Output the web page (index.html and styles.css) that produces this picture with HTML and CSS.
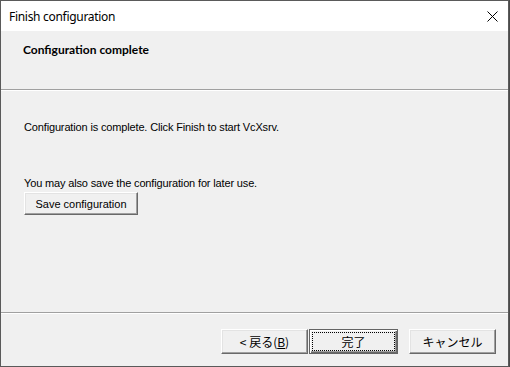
FILE: index.html
```html
<!DOCTYPE html>
<html>
<head>
<meta charset="utf-8">
<link rel="stylesheet" href="styles.css">
</head>
<body>
<div class="window">
  <div class="titlebar">
    <span class="title">Finish configuration</span>
    <svg class="close" width="11" height="11" viewBox="0 0 11 11"><path d="M0.5 0.5 L10.5 10.5 M10.5 0.5 L0.5 10.5" stroke="#000" stroke-width="1"/></svg>
  </div>
  <div class="header"><span class="heading">Configuration complete</span></div>
  <div class="sep"></div>
  <div class="content">
    <p class="line1">Configuration is complete. Click Finish to start VcXsrv.</p>
    <p class="line2">You may also save the configuration for later use.</p>
    <button class="btn save">Save configuration</button>
  </div>
  <div class="sep"></div>
  <div class="footer">
    <button class="btn jp back">&lt;&nbsp;戻る(<u>B</u>)</button>
    <button class="btn jp default"><span class="focus">完了</span></button>
    <button class="btn jp cancel">キャンセル</button>
  </div>
</div>
</body>
</html>
```
FILE: styles.css
```css
* { box-sizing: border-box; }
html, body { margin: 0; padding: 0; background: #4a4a4a; }
body { width: 510px; height: 367px; overflow: hidden; }
.window {
  width: 509px; height: 367px;
  border: 1px solid #5a5a5a;
  background: #f0f0f0;
  display: flex; flex-direction: column;
}
.titlebar {
  height: 30px; background: #fff;
  display: flex; align-items: center; justify-content: space-between;
  padding: 0 10px 0 8px;
}
.title { font-family: "Noto Sans", sans-serif; font-size: 12px; letter-spacing: -0.3px; color: #000; }
.close { display: block; }
.header {
  height: 58px; padding: 9px 0 0 22px;
}
.heading { font-family: "Lato", sans-serif; font-weight: bold; font-size: 12px; color: #000; }
.sep { height: 2px; border-top: 1px solid #a0a0a0; border-bottom: 1px solid #fff; }
.content {
  flex: 1; padding: 0 0 0 23px;
  font-family: "Liberation Sans", sans-serif; font-size: 11px; letter-spacing: -0.15px; color: #000;
}
.content p { margin: 0; }
.line1 { padding-top: 30px; }
.line2 { padding-top: 44px; }
.btn {
  background: #f0f0f0; color: #000;
  border: 1px solid; border-color: #fff #696969 #696969 #fff;
  box-shadow: inset -1px -1px 0 #a0a0a0, inset 1px 1px 0 #e3e3e3;
  padding: 0; margin: 0;
}
.save {
  margin-top: 3px; width: 114px; height: 23px;
  font-family: "Liberation Sans", sans-serif; font-size: 11px;
}
.footer {
  height: 52px; display: flex; align-items: flex-start;
  padding: 15px 0 0 220px;
}
.jp { font-family: "Noto Sans CJK JP", sans-serif; font-size: 12px; height: 25px; width: 87px; }
.back { margin-right: 1px; }
.default {
  width: 89px;
  border: 1px solid #646464;
  box-shadow: inset 1px 1px 0 #fff, inset -1px -1px 0 #696969, inset -2px -2px 0 #a0a0a0;
  padding: 3px;
  margin-right: 11px;
}
.focus {
  display: flex; align-items: center; justify-content: center;
  width: 100%; height: 100%;
  outline: 1px dotted #000;
}
```
